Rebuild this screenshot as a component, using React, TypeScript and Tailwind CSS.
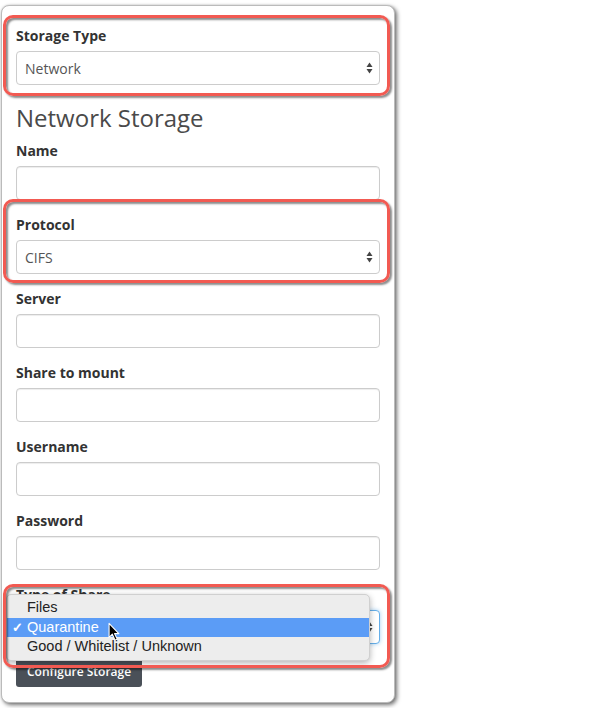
import React from "react";

const font = { fontFamily: '"Open Sans", "Liberation Sans", sans-serif' };

function Arrows() {
  return (
    <svg width="7" height="12" viewBox="0 0 7 12" className="absolute right-[6px] top-1/2 -translate-y-1/2">
      <path d="M3.5 0.5 L6.5 5 L0.5 5 Z" fill="#444" />
      <path d="M3.5 11.5 L6.5 7 L0.5 7 Z" fill="#444" />
    </svg>
  );
}

function Label({ children }: { children: React.ReactNode }) {
  return <label className="block h-5 text-[14px] leading-5 font-bold text-[#333]">{children}</label>;
}

function Field({ label }: { label: string }) {
  return (
    <div className="flex flex-col gap-[5px]">
      <Label>{label}</Label>
      <div className="h-[34px] w-full rounded border border-[#ccc] bg-white shadow-[inset_0_1px_1px_rgba(0,0,0,0.075)]" />
    </div>
  );
}

function SelectBox({ value, focused }: { value: string; focused?: boolean }) {
  return (
    <div
      className={
        focused
          ? "relative flex h-[34px] w-full items-center rounded border border-[#66afe9] bg-white px-[8px] shadow-[0_0_4px_rgba(102,175,233,0.6)]"
          : "relative flex h-[34px] w-full items-center rounded border border-[#ccc] bg-white px-[8px]"
      }
    >
      <span className="text-[14px] text-[#555]">{value}</span>
      <Arrows />
    </div>
  );
}

// red annotation ring drawn over a form group
function Highlight({ className }: { className: string }) {
  return (
    <div
      className={
        "pointer-events-none absolute rounded-[10px] border-[3px] border-[#f25a52] shadow-[2px_2px_2px_rgba(0,0,0,0.45),inset_2px_2px_2px_rgba(0,0,0,0.45)] " +
        className
      }
    />
  );
}

function Cursor() {
  return (
    <svg width="13" height="20" viewBox="0 0 12 18" className="absolute left-[101px] top-[27px]">
      <path d="M1 1 L1 14 L4 11 L6.5 16.5 L8.5 15.5 L6 10.5 L10 10.5 Z" fill="#000" stroke="#fff" strokeWidth="1" strokeLinejoin="round" />
    </svg>
  );
}

export default function App() {
  return (
    <div className="min-h-screen bg-white pt-[5px] pl-[1px]" style={font}>
      <div className="flex w-[394px] flex-col rounded-lg border border-[#bbb] bg-white px-[14px] pt-[20px] pb-[15px] shadow-[2px_2px_4px_rgba(0,0,0,0.55),0_0_2px_rgba(0,0,0,0.15)]">
        {/* Storage Type */}
        <div className="relative flex flex-col gap-[5px]">
          <Label>Storage Type</Label>
          <SelectBox value="Network" />
          <Highlight className="-top-[11px] -bottom-[11px] -left-[13px] -right-[10px]" />
        </div>

        <h3 className="mt-[20px] mb-[10px] text-[24px] leading-[26px] font-normal text-[#4a4a4a]">Network Storage</h3>

        <div className="flex flex-col gap-[15px]">
          <Field label="Name" />

          {/* Protocol */}
          <div className="relative flex flex-col gap-[5px]">
            <Label>Protocol</Label>
            <SelectBox value="CIFS" />
            <Highlight className="-top-[16px] -bottom-[9px] -left-[13px] -right-[10px]" />
          </div>

          <Field label="Server" />
          <Field label="Share to mount" />
          <Field label="Username" />
          <Field label="Password" />

          {/* Type of Share with open menu */}
          <div className="relative z-10 flex flex-col gap-[5px]">
            <Label>Type of Share</Label>
            <SelectBox value="Quarantine" focused />
            <div
              className="absolute left-[-10px] top-[9px] flex w-[364px] flex-col rounded-[5px] border border-[#d0d0d0] bg-[#ededed] py-[3px] text-[14.5px] text-[#222] shadow-[0_2px_6px_rgba(0,0,0,0.3)]"
              style={{ fontFamily: '"Liberation Sans", Arial, sans-serif' }}
            >
              <div className="flex h-[20px] items-center pl-[20px]">Files</div>
              <div className="flex h-[19px] items-center gap-[4px] bg-[#5b9cf6] pl-[5px] text-white">
                <span className="w-[11px] text-[13px] font-bold">✓</span>
                Quarantine
              </div>
              <div className="flex h-[20px] items-center pl-[20px]">Good / Whitelist / Unknown</div>
              <Cursor />
            </div>
            <Highlight className="-top-[1px] -bottom-[24px] -left-[13px] -right-[10px]" />
          </div>

          <button className="-mt-[2px] h-[30px] w-fit rounded-[3px] bg-[#4a5058] px-[11px] text-[12px] font-semibold text-white">
            Configure Storage
          </button>
        </div>
      </div>
    </div>
  );
}
